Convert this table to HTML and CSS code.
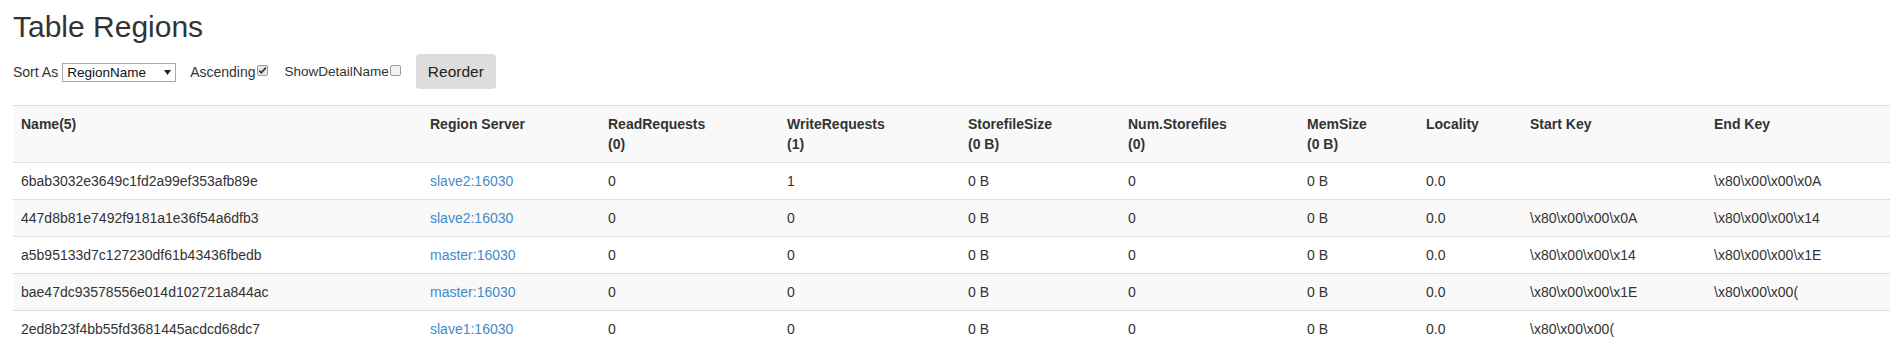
FILE: index.html
```html
<!DOCTYPE html>
<html lang="en">
<head>
<meta charset="utf-8">
<title>Table Regions</title>
<link rel="stylesheet" href="styles.css">
</head>
<body>
<div class="page">
  <h2 class="title">Table Regions</h2>
  <form class="controls">
    <span class="lbl">Sort As</span>
    <span class="select-wrap">
      <select class="select">
        <option>RegionName</option>
        <option>ReadRequest</option>
        <option>WriteRequest</option>
      </select>
      <svg class="select-arrow" width="7" height="5" viewBox="0 0 7 5"><path d="M0 0H7L3.5 5Z" fill="#222"/></svg>
    </span>
    <span class="lbl lbl-asc">Ascending</span>
    <span class="cb" role="checkbox" aria-checked="true">
      <svg width="11" height="11" viewBox="0 0 11 11"><rect x="0.5" y="0.5" width="10" height="10" rx="1.5" fill="#e9e9e9" stroke="#9a9a9a"/><path d="M2.3 5.6L4.4 7.8L8.8 2.6" fill="none" stroke="#3a3a3a" stroke-width="1.7"/></svg>
    </span>
    <span class="lbl lbl-detail">ShowDetailName</span>
    <span class="cb" role="checkbox" aria-checked="false">
      <svg width="11" height="11" viewBox="0 0 11 11"><rect x="0.5" y="0.5" width="10" height="10" rx="1.5" fill="#f1f1f1" stroke="#9a9a9a"/></svg>
    </span>
    <button type="button" class="btn">Reorder</button>
  </form>
  <table class="regions">
    <colgroup>
      <col class="c-name"><col class="c-rs"><col class="c-rr"><col class="c-wr"><col class="c-ss">
      <col class="c-ns"><col class="c-ms"><col class="c-loc"><col class="c-sk"><col class="c-ek">
    </colgroup>
    <tbody>
      <tr>
        <th>Name(5)</th><th>Region Server</th><th>ReadRequests<br>(0)</th><th>WriteRequests<br>(1)</th>
        <th>StorefileSize<br>(0 B)</th><th>Num.Storefiles<br>(0)</th><th>MemSize<br>(0 B)</th>
        <th>Locality</th><th>Start Key</th><th>End Key</th>
      </tr>
      <tr>
        <td>6bab3032e3649c1fd2a99ef353afb89e</td><td><a href="#">slave2:16030</a></td><td>0</td><td>1</td>
        <td>0 B</td><td>0</td><td>0 B</td><td>0.0</td><td></td><td>\x80\x00\x00\x0A</td>
      </tr>
      <tr>
        <td>447d8b81e7492f9181a1e36f54a6dfb3</td><td><a href="#">slave2:16030</a></td><td>0</td><td>0</td>
        <td>0 B</td><td>0</td><td>0 B</td><td>0.0</td><td>\x80\x00\x00\x0A</td><td>\x80\x00\x00\x14</td>
      </tr>
      <tr>
        <td>a5b95133d7c127230df61b43436fbedb</td><td><a href="#">master:16030</a></td><td>0</td><td>0</td>
        <td>0 B</td><td>0</td><td>0 B</td><td>0.0</td><td>\x80\x00\x00\x14</td><td>\x80\x00\x00\x1E</td>
      </tr>
      <tr>
        <td>bae47dc93578556e014d102721a844ac</td><td><a href="#">master:16030</a></td><td>0</td><td>0</td>
        <td>0 B</td><td>0</td><td>0 B</td><td>0.0</td><td>\x80\x00\x00\x1E</td><td>\x80\x00\x00(</td>
      </tr>
      <tr>
        <td>2ed8b23f4bb55fd3681445acdcd68dc7</td><td><a href="#">slave1:16030</a></td><td>0</td><td>0</td>
        <td>0 B</td><td>0</td><td>0 B</td><td>0.0</td><td>\x80\x00\x00(</td><td></td>
      </tr>
    </tbody>
  </table>
</div>
</body>
</html>
```
FILE: styles.css
```css
html, body {
  margin: 0;
  padding: 0;
  background: #fff;
}
body {
  font-family: "Liberation Sans", Arial, Helvetica, sans-serif;
  font-size: 14px;
  line-height: 20px;
  color: #333;
}
.page {
  padding: 0 13px;
}
.title {
  margin: 10px 0 11px;
  font-size: 30px;
  line-height: 33px;
  font-weight: 500;
  color: #333;
}
.controls {
  display: flex;
  align-items: center;
  height: 35px;
  margin: 0 0 16px;
}
.lbl {
  font-size: 14px;
  line-height: 20px;
  color: #333;
}
.select-wrap {
  position: relative;
  display: inline-flex;
  margin-left: 4px;
  margin-top: 2px;
}
.select {
  appearance: none;
  -webkit-appearance: none;
  width: 114px;
  height: 19px;
  margin: 0;
  padding: 0 0 0 4px;
  border: 1px solid #a9a9a9;
  border-radius: 0;
  background: #fff;
  font-family: "Liberation Sans", Arial, sans-serif;
  font-size: 13.5px;
  line-height: 17px;
  color: #111;
}
.select-arrow {
  position: absolute;
  left: 102px;
  top: 7px;
  pointer-events: none;
}
.lbl-asc {
  margin-left: 14px;
}
.lbl-detail {
  margin-left: 17px;
  font-size: 13.5px;
}
.cb {
  display: inline-flex;
  width: 11px;
  height: 11px;
  margin-left: 1px;
  margin-top: -2px;
}
.btn {
  margin-left: 15px;
  width: 80px;
  height: 35px;
  padding: 0;
  border: none;
  border-radius: 4px;
  background: #dddddd;
  font-family: "Liberation Sans", Arial, sans-serif;
  font-size: 15.5px;
  color: #222;
  cursor: pointer;
}
.regions {
  width: 1877px;
  table-layout: fixed;
  border-collapse: collapse;
  border-spacing: 0;
}
.regions th,
.regions td {
  padding: 8px;
  border-top: 1px solid #ddd;
  text-align: left;
  vertical-align: top;
  line-height: 20px;
  white-space: nowrap;
}
.regions th {
  font-weight: bold;
  color: #333;
}
.regions tr:nth-child(odd) {
  background: #f9f9f9;
}
.regions a {
  color: #428bca;
  text-decoration: none;
}
.c-name { width: 409px; }
.c-rs { width: 178px; }
.c-rr { width: 179px; }
.c-wr { width: 181px; }
.c-ss { width: 160px; }
.c-ns { width: 179px; }
.c-ms { width: 119px; }
.c-loc { width: 104px; }
.c-sk { width: 184px; }
.c-ek { width: 184px; }
```
